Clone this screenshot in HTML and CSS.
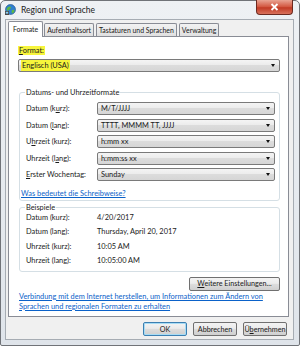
FILE: index.html
```html
<html lang="de">

<head>
    <meta charset="UTF-8">
    <meta name="viewport" content="width=device-width, initial-scale=1.0">
    <title>Region und Sprache</title>

    <link rel="stylesheet" href="styles.css">
</head>

<body>

    <div class="window">

        <div class="titlebar">
            <svg class="app-icon" width="11" height="11" viewBox="0 0 11 11">
                <circle cx="5.5" cy="5.5" r="5" fill="#2f7fd0" stroke="#1b4f8a" stroke-width="0.6"/>
                <path d="M2 4 C3 2.5 5 2 6 3 C6.5 4 5 4.5 4.5 5.5 C4 6.5 3 6 2.5 7 C1.5 6 1.5 5 2 4 Z" fill="#5cb845"/>
                <path d="M7 6 C8 5.5 9.5 6 9.5 7 C9 8.5 8 9 7 9.5 C6.5 8.5 6.5 7 7 6 Z" fill="#5cb845"/>
                <rect x="0" y="7" width="4" height="4" fill="#4a4a4a"/>
                <rect x="0.8" y="7.8" width="2.4" height="1.8" fill="#8ccff5"/>
            </svg>
            <span class="title">Region und Sprache</span>
            <div class="close">
                <svg width="9" height="8" viewBox="0 0 9 8">
                    <path d="M1.5 1 L7.5 7 M7.5 1 L1.5 7" stroke="#fff" stroke-width="1.8"/>
                </svg>
            </div>
        </div>

        <div class="client">

            <div class="tabs">
                <div class="tab active">Formate</div>
                <div class="tab">Aufenthaltsort</div>
                <div class="tab">Tastaturen und Sprachen</div>
                <div class="tab">Verwaltung</div>
            </div>

            <div class="panel">

                <div class="format-label"><span class="hl"><u>F</u>ormat:</span></div>
                <div class="combo format-combo">
                    <span class="hl">Englisch (USA)</span>
                    <span class="arrow"></span>
                </div>

                <div class="group formats">
                    <div class="legend">Datums- und Uhrzeitformate</div>
                    <div class="row">
                        <span class="label">Datum (k<u>u</u>rz):</span>
                        <div class="combo"><span>M/T/JJJJ</span><span class="arrow"></span></div>
                    </div>
                    <div class="row">
                        <span class="label">Datum (<u>l</u>ang):</span>
                        <div class="combo"><span>TTTT, MMMM TT, JJJJ</span><span class="arrow"></span></div>
                    </div>
                    <div class="row">
                        <span class="label">U<u>h</u>rzeit (kurz):</span>
                        <div class="combo"><span>h:mm xx</span><span class="arrow"></span></div>
                    </div>
                    <div class="row">
                        <span class="label">Uhrzeit (l<u>a</u>ng):</span>
                        <div class="combo"><span>h:mm:ss xx</span><span class="arrow"></span></div>
                    </div>
                    <div class="row">
                        <span class="label"><u>E</u>rster Wochentag:</span>
                        <div class="combo"><span>Sunday</span><span class="arrow"></span></div>
                    </div>
                    <a class="link help-link" href="#">Was bedeutet die Schreibweise?</a>
                </div>

                <div class="group examples">
                    <div class="legend">Beispiele</div>
                    <div class="example"><span class="label">Datum (kurz):</span><span>4/20/2017</span></div>
                    <div class="example"><span class="label">Datum (lang):</span><span>Thursday, April 20, 2017</span></div>
                    <div class="example"><span class="label">Uhrzeit (kurz):</span><span>10:05 AM</span></div>
                    <div class="example"><span class="label">Uhrzeit (lang):</span><span>10:05:00 AM</span></div>
                </div>

                <div class="more">
                    <button class="btn more-btn"><u>W</u>eitere Einstellungen...</button>
                </div>

                <a class="link net-link" href="#">Verbindung mit dem Internet herstellen, um Informationen zum Ändern von<br>Sprachen und regionalen Formaten zu erhalten</a>

            </div>

            <div class="buttons">
                <button class="btn ok">OK</button>
                <button class="btn">Abbrechen</button>
                <button class="btn">Ü<u>b</u>ernehmen</button>
            </div>

        </div>

    </div>

</body>

</html>
```

FILE: styles.css
```css
body {
    margin: 0px;
    padding: 0px;
    background: #ffffff;
    font-family: Lato, "Liberation Sans", sans-serif;
    font-size: 7.4px;
    color: #1a1a1a;
}
.window {
    width: 300px;
    height: 346px;
    box-sizing: border-box;
    border: 1px solid #707378;
    border-radius: 5px 5px 2px 2px;
    background: linear-gradient(#eef1f4, #dfe4ea);
    padding: 0 5px 5px 4px;
    display: flex;
    flex-direction: column;
}
.titlebar {
    height: 18px;
    display: flex;
    align-items: center;
    position: relative;
}
.app-icon {
    margin: 0 5px 1px 0;
}
.title {
    font-size: 8.5px;
    color: #1a1a1a;
    padding-bottom: 1px;
}
.close {
    position: absolute;
    top: -1px;
    right: 1px;
    width: 37px;
    height: 15px;
    border: 1px solid #6d2a20;
    border-top: 0;
    border-radius: 0 0 4px 4px;
    box-sizing: border-box;
    background: linear-gradient(#e9a493, #d2553e 50%, #c13a24 55%, #d9725c);
    display: flex;
    align-items: center;
    justify-content: center;
}
.client {
    flex: 1;
    background: #f0f0f0;
    border: 1px solid #a6acb3;
    padding: 1px 3px 0 2px;
    display: flex;
    flex-direction: column;
}
.tabs {
    display: flex;
    height: 15px;
    align-items: flex-end;
    padding-left: 2px;
    position: relative;
    z-index: 1;
    font-size: 6.9px;
}
.tab {
    height: 13px;
    line-height: 13px;
    padding: 0 2px;
    margin-right: 2px;
    border: 1px solid #898c95;
    border-bottom: 0;
    border-radius: 2px 2px 0 0;
    background: linear-gradient(#f2f2f2, #e0e0e0);
    box-sizing: border-box;
}
.tab.active {
    height: 16px;
    line-height: 15px;
    padding: 0 4px;
    margin: 0 1px 0 -2px;
    background: #ffffff;
    margin-bottom: -1px;
}
.panel {
    width: 281px;
    height: 281px;
    box-sizing: border-box;
    background: #ffffff;
    border: 1px solid #898c95;
    padding: 8px 8px 0 9px;
    display: flex;
    flex-direction: column;
}
.hl {
    background: #f7f53c;
    padding: 0 1px;
}
.format-label {
    height: 11px;
    line-height: 11px;
}
.combo {
    height: 13px;
    box-sizing: border-box;
    border: 1px solid #7a7a7a;
    border-radius: 2px;
    background: linear-gradient(#f4f4f4 0%, #ececec 45%, #dcdcdc 50%, #d6d6d6 100%);
    display: flex;
    align-items: center;
    padding: 0 3px;
    justify-content: space-between;
    line-height: 11px;
}
.format-combo {
    margin-top: 3px;
    padding-left: 2px;
}
.arrow {
    width: 0;
    height: 0;
    border-left: 2.5px solid transparent;
    border-right: 2.5px solid transparent;
    border-top: 3px solid #111111;
    margin-right: 1px;
}
.group {
    border: 1px solid #d5dfe5;
    border-radius: 3px;
    position: relative;
    margin-left: 1px;
}
.legend {
    position: absolute;
    top: -6px;
    left: 5px;
    background: #ffffff;
    padding: 0 1px;
    line-height: 11px;
}
.formats {
    margin-top: 20px;
    padding: 9px 4px 1px 6px;
    display: flex;
    flex-direction: column;
    gap: 3.5px;
}
.row {
    display: flex;
    align-items: center;
}
.label {
    width: 71px;
    flex: none;
}
.row .combo {
    flex: 1;
}
.help-link {
    margin-top: 4px;
    margin-left: -5px;
}
.link {
    color: #0b62c9;
    text-decoration: underline;
    line-height: 10px;
}
.examples {
    margin-top: 6px;
    padding: 3px 4px 3px 6px;
    display: flex;
    flex-direction: column;
}
.example {
    display: flex;
    height: 14.3px;
    align-items: center;
}
.more {
    display: flex;
    justify-content: flex-end;
    margin-top: 5px;
}
.btn {
    font-family: inherit;
    font-size: 7.2px;
    color: #1a1a1a;
    height: 14px;
    padding: 0;
    box-sizing: border-box;
    border: 1px solid #707070;
    border-radius: 2px;
    background: linear-gradient(#f3f3f3 0%, #ebebeb 45%, #dddddd 50%, #cfcfcf 100%);
    line-height: 11px;
}
.more-btn {
    width: 91px;
}
.net-link {
    margin-top: 1px;
    margin-left: 1px;
}
.buttons {
    display: flex;
    justify-content: flex-end;
    gap: 6px;
    margin-top: 5px;
    padding-right: 3px;
}
.buttons .btn {
    width: 44px;
}
.buttons .ok {
    border-color: #3c7fb1;
    box-shadow: inset 0 0 0 1px #a7dcf5;
}
```
